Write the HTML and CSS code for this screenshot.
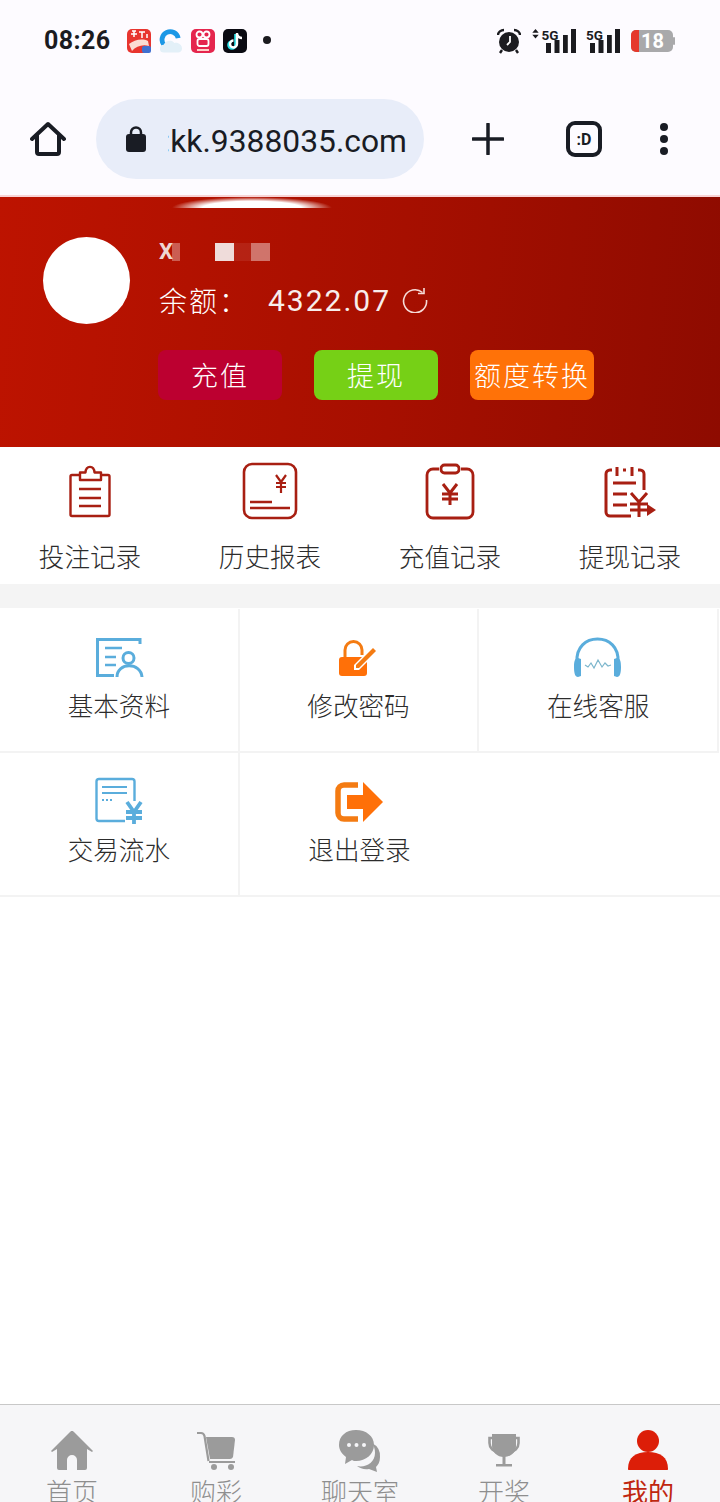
FILE: index.html
```html
<!DOCTYPE html>
<html lang="zh">
<head>
<meta charset="utf-8">
<title>我的</title>
<link rel="stylesheet" href="styles.css">
</head>
<body>
<div class="page">
  <div class="statusbar">
    <span class="time">08:26</span>
    <div class="apps">
      <svg class="app" viewBox="0 0 24 24"><rect width="24" height="24" rx="5" fill="#e8352f"/><path d="M2 15c5-4 13-6 19-3l1 5c-6-2-13 0-17 5z" fill="#fbdcd4"/><path d="M5 2h4M7 2v6M4 5h6M12 3h6M15 3v6M20 5v4" stroke="#fff" stroke-width="1.500"/><rect x="15" y="17" width="9" height="7" rx="2" fill="#3f6fd0"/></svg>
      <svg class="app app-cloud" viewBox="0 0 25 24"><path d="M5 16a8.500 8.500 0 1 1 15-7" fill="none" stroke="#1c98e6" stroke-width="5"/><path d="M5 24a4 4 0 0 1 0-8c1-4 8-6 11-2 4-1 8 2 8 6 0 2-2 4-4 4z" fill="#e3f0f8"/></svg>
      <svg class="app" viewBox="0 0 24 24"><rect width="24" height="24" rx="5" fill="#e5264e"/><circle cx="8.500" cy="5.500" r="3" fill="none" stroke="#fff" stroke-width="1.800"/><circle cx="15.500" cy="5.500" r="3" fill="none" stroke="#fff" stroke-width="1.800"/><rect x="6.500" y="10" width="11" height="7" rx="2" fill="none" stroke="#fff" stroke-width="1.800"/><rect x="6" y="20" width="12" height="2" fill="#ffd0c8"/></svg>
      <svg class="app" viewBox="0 0 24 24"><rect width="24" height="24" rx="5" fill="#0a0a12"/><path d="M12.500 5v11a3.500 3.500 0 1 1-3.500-3.500" fill="none" stroke="#28e0e8" stroke-width="2.600"/><path d="M14 4v11a3.500 3.500 0 1 1-3.500-3.500M14 5c1 3 3 4 5 4" fill="none" stroke="#fff" stroke-width="2.400"/></svg>
      <span class="dot"></span>
    </div>
    <div class="sys">
      <svg class="alarm" viewBox="0 0 24 26"><circle cx="12" cy="14" r="10" fill="#1b1b1f"/><path d="M1 7c0-3 3-5 6-5M23 7c0-3-3-5-6-5" fill="none" stroke="#1b1b1f" stroke-width="2.400"/><path d="M5 22l-2 3M19 22l2 3" stroke="#1b1b1f" stroke-width="2.400"/><path d="M13 8v6l-3 3" fill="none" stroke="#fff" stroke-width="1.800"/></svg>
      <svg class="sig1" viewBox="0 0 46 24"><path d="M3.500 0l3.200 3.800H.3zM3.500 9.500l3.200-3.800H.3z" fill="#1b1b1f"/><text x="9.500" y="10.500" class="sig-text">5G</text><rect x="14" y="14" width="5" height="10" fill="#1b1b1f"/><rect x="22.500" y="11" width="5" height="13" fill="#1b1b1f"/><rect x="31" y="6" width="4.800" height="18" fill="#1b1b1f"/><rect x="39" y="0" width="5" height="24" fill="#1b1b1f"/></svg>
      <svg class="sig2" viewBox="0 0 34 24"><text x="0" y="10.500" class="sig-text">5G</text><rect x="4" y="14" width="5" height="10" fill="#1b1b1f"/><rect x="12.500" y="11" width="5" height="13" fill="#1b1b1f"/><rect x="21" y="6" width="4.800" height="18" fill="#1b1b1f"/><rect x="29" y="0" width="5" height="24" fill="#1b1b1f"/></svg>
      <svg class="batt" viewBox="0 0 44 24"><rect x="0" y="1" width="42" height="22" rx="5" fill="#a9a9ab"/><path d="M5 1h3v22H5a5 5 0 0 1-5-5V6a5 5 0 0 1 5-5z" fill="#e5392c"/><rect x="42" y="8" width="2" height="8" rx="1" fill="#a9a9ab"/><text x="10" y="19" class="batt-text">18</text></svg>
    </div>
  </div>

  <div class="toolbar">
    <svg class="t-home" viewBox="0 0 36 36"><path d="M2 18L18 3l16 15M7 14v17a2 2 0 0 0 2 2h18a2 2 0 0 0 2-2V14" fill="none" stroke="#191c24" stroke-width="4" stroke-linecap="round" stroke-linejoin="round"/></svg>
    <div class="pill">
      <svg class="lock" viewBox="0 0 20 26"><path d="M5 10V6.500a5 5 0 0 1 10 0V10" fill="none" stroke="#191c24" stroke-width="2.500"/><rect y="8" width="20" height="18" rx="3" fill="#191c24"/></svg>
      <div class="url"><span>:kk.9388035.com</span></div>
    </div>
    <svg class="t-plus" viewBox="0 0 32 32"><path d="M16 1v30M1 16h30" stroke="#191c24" stroke-width="3.500" stroke-linecap="round"/></svg>
    <div class="t-tabs">:D</div>
    <div class="t-menu"><i></i><i></i><i></i></div>
  </div>

  <div class="main">
    <section class="hero">
      <div class="glow"></div>
      <div class="avatar"></div>
      <div class="info">
        <div class="name">
          <span class="name-x">X</span><span class="px px-a"></span><span class="px px-b"></span><span class="px px-c"></span><span class="px px-d"></span>
        </div>
        <div class="balance">
          <span class="bal-label">余额：</span>
          <span class="bal-num">4322.07</span>
          <svg class="refresh" viewBox="0 0 28 26"><path d="M21.500 5.500A11.500 11.500 0 1 0 25.500 13" fill="none" stroke="#f6dcd8" stroke-width="1.600"/><path d="M17 6.500h6V1" fill="none" stroke="#f6dcd8" stroke-width="1.600"/></svg>
        </div>
        <div class="actions">
          <button class="btn btn-red">充值</button>
          <button class="btn btn-green">提现</button>
          <button class="btn btn-orange">额度转换</button>
        </div>
      </div>
    </section>

    <section class="records">
      <div class="rec">
        <svg class="rec-icon" viewBox="0 0 60 60"><g fill="none" stroke="#a81f12" stroke-width="2.400" stroke-linejoin="round"><path d="M20 13h-8a1.500 1.500 0 0 0-1.500 1.500v38a1.500 1.500 0 0 0 1.500 1.500h36a1.500 1.500 0 0 0 1.500-1.500v-38A1.500 1.500 0 0 0 48 13h-7"/><path d="M20 18V10.500h5.500C26 3 34 3 34.500 10.500H41V18z"/><path d="M19 27h22M19 36h22M19 44h22"/></g></svg>
        <span class="rec-label">投注记录</span>
      </div>
      <div class="rec">
        <svg class="rec-icon" viewBox="0 0 60 60"><g fill="none" stroke="#a81f12" stroke-width="2.600"><rect x="4" y="2" width="52" height="54" rx="8"/><path d="M36 13l5 7 5-7M41 20v11M36 21h10M36 25h10" stroke-width="2.200"/><path d="M10 40h22M10 46h40" stroke-width="2.600"/></g></svg>
        <span class="rec-label">历史报表</span>
      </div>
      <div class="rec">
        <svg class="rec-icon" viewBox="0 0 60 60"><g fill="none" stroke="#a81f12" stroke-width="2.800"><path d="M19 7h-6a6 6 0 0 0-6 6v37a6 6 0 0 0 6 6h34a6 6 0 0 0 6-6V13a6 6 0 0 0-6-6h-6"/><rect x="21" y="3" width="18" height="8" rx="3.500"/><path d="M23 22l7 9 7-9M30 31v12M22 32h16M22 37h16" stroke-width="3"/></g></svg>
        <span class="rec-label">充值记录</span>
      </div>
      <div class="rec">
        <svg class="rec-icon" viewBox="0 0 60 60"><g fill="none" stroke="#a81f12" stroke-width="3"><path d="M12 8H10a4 4 0 0 0-4 4v38a4 4 0 0 0 4 4h21M23 8h3M38 8h2a4 4 0 0 1 4 4v16"/><path d="M17 5v9M32 5v9M13 21h23M13 32h14M13 43h14"/><path d="M31 31l8 9 8-9M39 40v15M30 42h18M30 48h18"/></g><path d="M47 42l9 6-9 6z" fill="#a81f12"/></svg>
        <span class="rec-label">提现记录</span>
      </div>
    </section>

    <section class="grid">
      <div class="cell">
        <svg class="cell-icon" viewBox="0 0 60 50"><g fill="none" stroke="#5aaddc" stroke-width="3"><path d="M51 12V7.500H8.500v36H25"/><path d="M16 16h17M16 25h11M16 33h11" stroke-width="2.600"/><circle cx="39.500" cy="26" r="5.500"/><path d="M28 45c0-15 24-15 25 0"/></g></svg>
        <span class="cell-label">基本资料</span>
      </div>
      <div class="cell">
        <svg class="cell-icon" viewBox="0 0 60 50"><path d="M17 27v-9a8.500 8.500 0 0 1 17 0v5" fill="none" stroke="#f47b12" stroke-width="3"/><rect x="11" y="25" width="28" height="19" rx="3" fill="#ff7008"/><path d="M26 38v-5l14-14 5 5-14 14z" fill="#fff"/><path d="M28 36v-3l17-17 3 3-17 17z" fill="#f47b12"/></svg>
        <span class="cell-label">修改密码</span>
      </div>
      <div class="cell cell-end">
        <svg class="cell-icon" viewBox="0 0 60 50"><path d="M9 30C8 15 18 7 29.500 7S51 15 50 30" fill="none" stroke="#5aaddc" stroke-width="3"/><path d="M10 26l3 1v17l-3 1c-3 0-4-4-4-10s1-9 4-9zM49 26l-3 1v17l3 1c3 0 4-4 4-10s-1-9-4-9z" fill="#5aaddc"/><path d="M17 33l3 2 3-4 3 5 4-8 4 7 3-4 3 3 3-1" fill="none" stroke="#7cb6cc" stroke-width="1.200"/></svg>
        <span class="cell-label">在线客服</span>
      </div>
      <div class="cell">
        <svg class="cell-icon" viewBox="0 0 60 50"><g fill="none" stroke="#5aaddc"><path d="M36 45H10a2.500 2.500 0 0 1-2.500-2.500v-37A2.500 2.500 0 0 1 10 3h33a2.500 2.500 0 0 1 2.500 2.500V25" stroke-width="2.400"/><path d="M13 11h25M13 17h25" stroke-width="2.200"/><path d="M13 24h11" stroke-width="2" stroke-dasharray="2 2"/><path d="M38 26l7 10 7-10M45 36v12M37 36h16M37 42h16" stroke-width="3.800"/></g></svg>
        <span class="cell-label">交易流水</span>
      </div>
      <div class="cell cell-open">
        <svg class="cell-icon" viewBox="0 0 60 50"><path d="M29 9H15a6 6 0 0 0-6 6v22a6 6 0 0 0 6 6h14" fill="none" stroke="#f47b12" stroke-width="5.500"/><path d="M18 19h16V6l20 20-20 20V33H18z" fill="#ff7008"/></svg>
        <span class="cell-label">退出登录</span>
      </div>
      <div class="cell cell-open"></div>
    </section>
  </div>

  <nav class="tabbar">
    <div class="tab">
      <svg class="tab-icon" viewBox="0 0 50 44"><path d="M25 3c1 0 1.500.5 2 1l19 19-1 1-5-3v19a2 2 0 0 1-2 2h-8V32a5 5 0 0 0-10 0v10h-8a2 2 0 0 1-2-2V21l-5 3-1-1L23 4c.5-.5 1-1 2-1z" fill="#9b9b9b"/></svg>
      <span class="tab-label">首页</span>
    </div>
    <div class="tab">
      <svg class="tab-icon" viewBox="0 0 50 44"><path d="M6 5h4c2 0 3 1 3.500 3l4 25" fill="none" stroke="#9b9b9b" stroke-width="2.200"/><path d="M15 9h26a3 3 0 0 1 3 3l-2 17a4 4 0 0 1-3 2H19z" fill="#9b9b9b"/><path d="M18 34h26" stroke="#9b9b9b" stroke-width="2"/><circle cx="23" cy="39" r="3" fill="#9b9b9b"/><circle cx="40" cy="39" r="3" fill="#9b9b9b"/></svg>
      <span class="tab-label">购彩</span>
    </div>
    <div class="tab">
      <svg class="tab-icon" viewBox="0 0 50 44"><path d="M37 15a15 15 0 0 1 8 14c0 5-2 8-4 10l1 5-8-3c-5 1-9-1-12-3 8 2 18-3 18-13 0-4-1-7-3-10z" fill="#9b9b9b"/><path d="M21 2c10 0 18 6 18 15s-8 16-18 16c-1 0-3 0-4-1l-7 4 1-7C7 26 4 22 4 17 4 8 11 2 21 2z" fill="#9b9b9b"/><circle cx="14" cy="17" r="2" fill="#f6f6f8"/><circle cx="21.500" cy="17" r="2" fill="#f6f6f8"/><circle cx="29" cy="17" r="2" fill="#f6f6f8"/></svg>
      <span class="tab-label">聊天室</span>
    </div>
    <div class="tab">
      <svg class="tab-icon" viewBox="0 0 50 44"><path d="M13 10H10.500v5c0 5 4 9 9 9M37 10h2.500v5c0 5-4 9-9 9" fill="none" stroke="#9b9b9b" stroke-width="2.600"/><path d="M13 6h24v12c0 6-5 11-12 11S13 24 13 18z" fill="#9b9b9b"/><path d="M25 28v9" stroke="#9b9b9b" stroke-width="3"/><rect x="17" y="36" width="16" height="2.500" fill="#9b9b9b"/></svg>
      <span class="tab-label">开奖</span>
    </div>
    <div class="tab tab-on">
      <svg class="tab-icon" viewBox="0 0 50 44"><circle cx="25" cy="13" r="11" fill="#dc1e08"/><path d="M5 41c0-12 8-17 20-17s20 5 20 17c0 .7-.3 1-1 1H6c-.7 0-1-.3-1-1z" fill="#dc1e08"/></svg>
      <span class="tab-label">我的</span>
    </div>
  </nav>
</div>
</body>
</html>
```

FILE: styles.css
```css
* { box-sizing: border-box; }
html, body { margin: 0; padding: 0; }
body { font-family: "Noto Sans CJK SC", "Noto Sans", sans-serif; background: #fff; }
svg { display: block; }

.page { width: 720px; height: 1502px; display: flex; flex-direction: column; overflow: hidden; }
.main { flex: 1; min-height: 0; background: #fff; }

/* status bar */
.statusbar { height: 80px; flex: none; display: flex; align-items: center; padding-left: 44px; background: #fdfbff; }
.time { width: 83px; font: 700 25px Roboto, sans-serif; letter-spacing: .4px; color: #1b1b1f; }
.apps { display: flex; align-items: center; gap: 8px; width: 300px; margin-top: 2px; }
.app { width: 24px; height: 24px; }
.dot { width: 8px; height: 8px; margin-left: 8px; margin-top: -2px; border-radius: 50%; background: #1b1b1f; }
.sys { display: flex; align-items: center; margin-left: 70px; margin-top: 2px; }
.alarm { width: 24px; height: 26px; }
.sig1 { width: 46px; height: 24px; margin-left: 11px; overflow: visible; }
.sig2 { width: 34px; height: 24px; margin-left: 8px; overflow: visible; }
.batt { width: 44px; height: 24px; margin-left: 11px; }
.sig-text { font: 700 13.500px Roboto, sans-serif; fill: #1b1b1f; }
.batt-text { font: 700 20px Roboto, sans-serif; fill: #fff; }

/* browser toolbar */
.toolbar { height: 117px; flex: none; display: flex; align-items: center; padding: 19px 0 16px 30px; background: #fdfbff; border-bottom: 2px solid #f8d4d6; }
.t-home { width: 36px; height: 36px; }
.pill { width: 328px; height: 80px; margin-left: 30px; display: flex; align-items: center; padding: 0 16px 0 30px; border-radius: 40px; background: #e8edf9; }
.lock { width: 20px; height: 26px; flex: none; }
.url { width: 239px; margin-left: 22px; padding-top: 3px; overflow: hidden; display: flex; justify-content: flex-end; font: 400 31.800px/40px Roboto, sans-serif; color: #191c24; white-space: nowrap; }
.t-plus { width: 32px; height: 32px; margin-left: 48px; }
.t-tabs { width: 36px; height: 36px; margin-left: 62px; display: flex; align-items: center; justify-content: center; border: 4px solid #191c24; border-radius: 9px; font: 700 16px Roboto, sans-serif; color: #191c24; }
.t-menu { margin-left: 58px; display: flex; flex-direction: column; gap: 4px; }
.t-menu i { display: block; width: 8px; height: 8px; border-radius: 50%; background: #191c24; }

/* account hero */
.hero { position: relative; height: 250px; display: flex; align-items: flex-start; padding: 40px 0 0 43px; background: linear-gradient(95deg, #bd1300 0%, #a60f00 55%, #8e0b00 100%); color: #fff; }
.glow { position: absolute; top: 0; left: 172px; width: 160px; height: 11px; background: radial-gradient(ellipse 50% 100% at 50% 100%, #fff 62%, rgba(255,255,255,0) 100%); }
.avatar { width: 87px; height: 87px; flex: none; border-radius: 50%; background: #fff; }
.info { margin-left: 28px; }
.name { display: flex; height: 18px; margin-top: 6px; padding-left: 1px; }
.name-x { width: 13px; font: 700 22px/18px Roboto, sans-serif; color: #efd6d2; }
.px { display: block; height: 18px; }
.px-a { width: 8px; margin-right: 35px; background: rgba(255,255,255,.32); }
.px-b { width: 19px; background: #efdcda; }
.px-c { width: 17px; background: rgba(255,255,255,.08); }
.px-d { width: 19px; background: rgba(255,255,255,.42); }
.balance { height: 40px; margin-top: 20px; padding-left: 1px; display: flex; align-items: center; }
.bal-label { width: 109px; font-size: 28px; line-height: 40px; font-weight: 300; letter-spacing: 2px; color: #fff; margin-top: -3px; }
.bal-num { width: 133px; font: 400 30px/40px Roboto, sans-serif; letter-spacing: 2px; color: #f8eeec; }
.refresh { width: 28px; height: 26px; margin-top: -2px; }
.actions { display: flex; gap: 32px; margin-top: 29px; }
.btn { width: 124px; height: 50px; padding: 0; border: 0; border-radius: 8px; font-family: inherit; font-size: 27px; line-height: 50px; font-weight: 300; letter-spacing: 2px; color: #fff; white-space: nowrap; }
.btn-red { background: #bc0030; }
.btn-green { background: #76d016; }
.btn-orange { background: #ff7208; }

/* record shortcuts */
.records { display: grid; grid-template-columns: repeat(4, 180px); padding: 15px 0 8px; background: #fff; }
.rec { display: flex; flex-direction: column; align-items: center; }
.rec-icon { width: 60px; height: 60px; }
.rec-label { margin-top: 16px; margin-bottom: 2px; font-size: 25.600px; line-height: 36px; font-weight: 300; color: #2c2c2c; white-space: nowrap; }

/* menu grid */
.grid { display: grid; grid-template-columns: 239.670px 239.670px 240.660px; grid-auto-rows: 144px; padding-top: 1px; border-top: 24px solid #f4f4f4; }
.cell { display: flex; flex-direction: column; align-items: center; padding-top: 23px; border-right: 2px solid #f3f3f3; border-bottom: 2px solid #f3f3f3; }
.cell-end { margin-right: 1px; }
.cell-open { border-right: 0; }
.cell-icon { width: 60px; height: 50px; flex: none; }
.cell-label { margin-top: 5px; font-size: 25.600px; line-height: 36px; font-weight: 300; color: #2c2c2c; white-space: nowrap; }

/* bottom tabs */
.tabbar { flex: none; height: 98px; display: grid; grid-template-columns: repeat(5, 144px); background: #f6f6f8; border-top: 1px solid #c8c8c8; overflow: hidden; }
.tab { display: flex; flex-direction: column; align-items: center; padding-top: 23px; }
.tab-icon { width: 50px; height: 44px; flex: none; }
.tab-label { margin-top: -1px; font-size: 26px; line-height: 40px; font-weight: 300; color: #8e8e8e; white-space: nowrap; }
.tab-on .tab-label { color: #c0260f; font-weight: 400; }
```
